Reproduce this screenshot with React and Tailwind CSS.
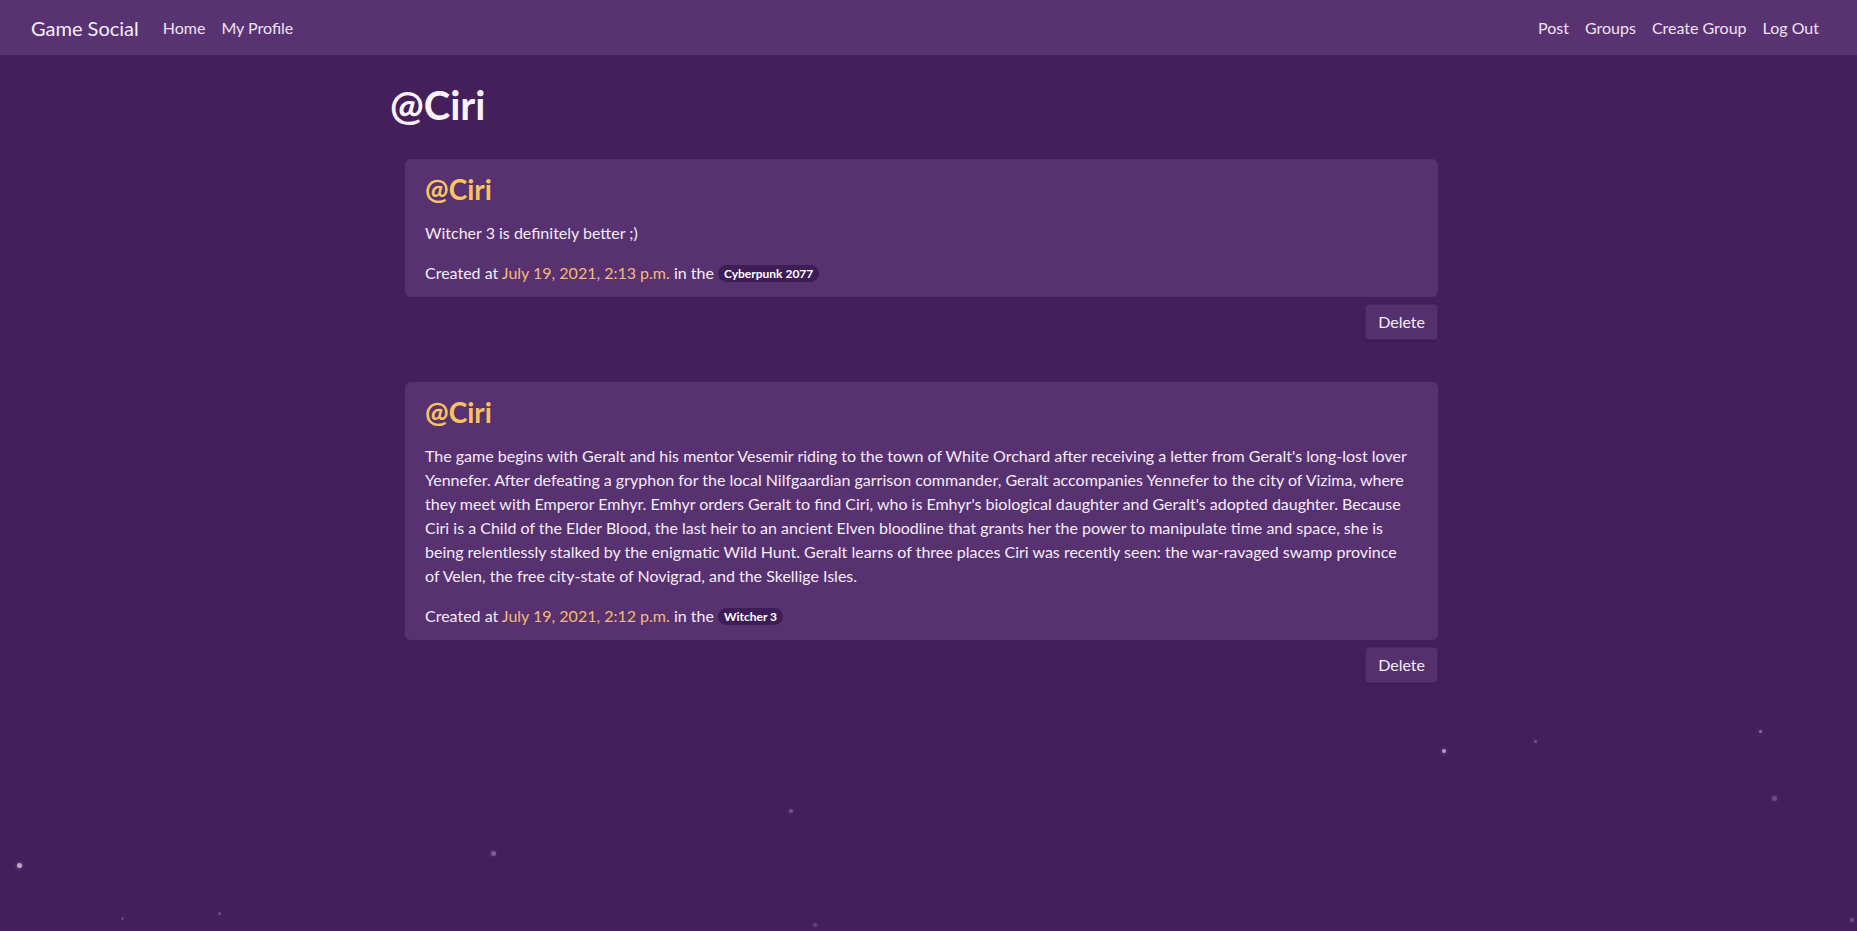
import React from "react";

const posts = [
  {
    id: 1,
    user: "Ciri",
    lines: ["Witcher 3 is definitely better ;)"],
    date: "July 19, 2021, 2:13 p.m.",
    group: "Cyberpunk 2077",
  },
  {
    id: 2,
    user: "Ciri",
    lines: [
      "The game begins with Geralt and his mentor Vesemir riding to the town of White Orchard after receiving a letter from Geralt's long-lost lover",
      "Yennefer. After defeating a gryphon for the local Nilfgaardian garrison commander, Geralt accompanies Yennefer to the city of Vizima, where",
      "they meet with Emperor Emhyr. Emhyr orders Geralt to find Ciri, who is Emhyr's biological daughter and Geralt's adopted daughter. Because",
      "Ciri is a Child of the Elder Blood, the last heir to an ancient Elven bloodline that grants her the power to manipulate time and space, she is",
      "being relentlessly stalked by the enigmatic Wild Hunt. Geralt learns of three places Ciri was recently seen: the war-ravaged swamp province",
      "of Velen, the free city-state of Novigrad, and the Skellige Isles.",
    ],
    date: "July 19, 2021, 2:12 p.m.",
    group: "Witcher 3",
  },
];

// background particles
const stars = [
  { x: 19, y: 865, s: 5, o: 0.75 },
  { x: 493, y: 853, s: 5, o: 0.35 },
  { x: 791, y: 811, s: 4, o: 0.3 },
  { x: 1444, y: 751, s: 4, o: 0.7 },
  { x: 1535, y: 741, s: 3, o: 0.3 },
  { x: 1760, y: 731, s: 3, o: 0.45 },
  { x: 1774, y: 798, s: 5, o: 0.25 },
  { x: 122, y: 918, s: 3, o: 0.2 },
  { x: 219, y: 913, s: 3, o: 0.25 },
  { x: 815, y: 925, s: 4, o: 0.2 },
  { x: 1852, y: 920, s: 4, o: 0.25 },
];

function Post({ post }) {
  return (
    <div className="mb-[42px]">
      <div className="bg-[#583270] rounded-md px-5 pt-[13px] pb-3">
        <h3 className="text-[28px] leading-[34px] font-bold text-[#f8c462] mb-[15px]">
          @{post.user}
        </h3>
        <p className="mb-4">
          {post.lines.map((line, i) => (
            <React.Fragment key={i}>
              {line}
              {i < post.lines.length - 1 && <br />}
            </React.Fragment>
          ))}
        </p>
        <p>
          Created at <span className="text-[#f4b97a]">{post.date}</span> in the{" "}
          <span className="inline-block align-[1px] bg-[#3e1d56] rounded-full px-[6px] text-[12px] leading-[17px] font-bold text-white">
            {post.group}
          </span>
        </p>
      </div>
      <div className="flex justify-end mt-[7px]">
        <button className="h-9 px-3 bg-[#54306f] border border-[#4a2764] rounded shadow text-[#f4ecf7]">
          Delete
        </button>
      </div>
    </div>
  );
}

export default function App() {
  return (
    <div
      className="relative min-h-[931px] overflow-hidden bg-[#451f5c] text-[#f4ecf7] text-base leading-6"
      style={{ fontFamily: "Lato, 'Open Sans', sans-serif" }}
    >
      {/* Navbar */}
      <nav className="h-[55px] bg-[#593271] flex items-center justify-between pl-[31px] pr-[38px]">
        <div className="flex items-center">
          <span className="text-[20px] text-[#f6eef9] mr-6">Game Social</span>
          <div className="flex gap-4 text-[#efe3f4]">
            <a>Home</a>
            <a>My Profile</a>
          </div>
        </div>
        <div className="flex gap-4 text-[#efe3f4]">
          <a>Post</a>
          <a>Groups</a>
          <a>Create Group</a>
          <a>Log Out</a>
        </div>
      </nav>

      {/* Content */}
      <div className="relative z-10 ml-[390px] w-[1048px] pt-[26px]">
        <h1 className="text-[40px] leading-[48px] font-bold text-[#fbf3fb] mb-[30px]">@Ciri</h1>
        <div className="pl-[15px]">
          {posts.map((p) => (
            <Post key={p.id} post={p} />
          ))}
        </div>
      </div>

      {stars.map((s, i) => (
        <span
          key={i}
          className="absolute rounded-full bg-[#e9d3ee]"
          style={{
            left: s.x - s.s / 2,
            top: s.y - s.s / 2,
            width: s.s,
            height: s.s,
            opacity: s.o,
            boxShadow: "0 0 4px rgba(233,211,238,0.5)",
          }}
        />
      ))}
    </div>
  );
}
